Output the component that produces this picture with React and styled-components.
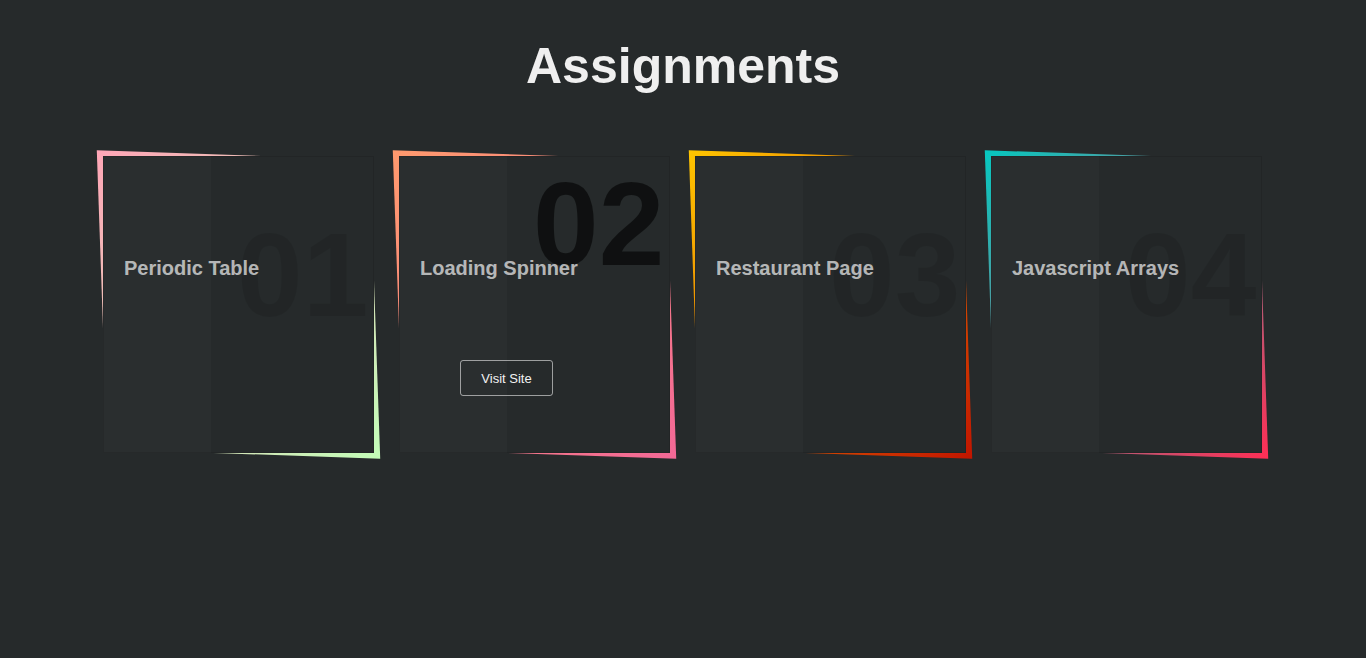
import styled, { createGlobalStyle } from 'styled-components';

const GlobalStyle = createGlobalStyle`
  html, body {
    margin: 0;
    padding: 0;
    background: #262a2b;
    font-family: "Liberation Sans", Arial, sans-serif;
  }
`;

const Page = styled.main`
  min-height: 658px;
  padding-top: 38px;
  box-sizing: border-box;
`;

const Heading = styled.h1`
  margin: 0 0 61px;
  text-align: center;
  font-size: 50px;
  line-height: 57px;
  font-weight: 700;
  color: #efefef;
`;

const CardRow = styled.section`
  position: relative;
  z-index: 0;
  display: flex;
  justify-content: center;
  gap: 25px;
  padding-right: 1px;
`;

const Card = styled.article`
  position: relative;
  width: 271px;
  height: 297px;
  background: #262a2b;
  box-shadow: inset 0 0 0 1px rgba(0, 0, 0, 0.1);

  &::before {
    content: '';
    position: absolute;
    inset: -1px;
    background: linear-gradient(315deg, ${p => p.$to}, ${p => p.$from});
    transform: skew(2deg, 2deg);
    z-index: -1;
  }

  &::after {
    content: '';
    position: absolute;
    top: 0;
    left: 0;
    width: 40%;
    height: 100%;
    background: rgba(255, 255, 255, 0.02);
    pointer-events: none;
  }
`;

const Number = styled.span`
  position: absolute;
  left: 134px;
  top: ${p => (p.$active ? '9px' : '60px')};
  font-size: 118px;
  line-height: 1;
  font-weight: 700;
  color: ${p => (p.$active ? 'rgba(0, 0, 0, 0.6)' : 'rgba(0, 0, 0, 0.1)')};
  pointer-events: none;
`;

const Content = styled.div`
  position: relative;
  z-index: 1;
  display: flex;
  flex-direction: column;
  align-items: flex-start;
  padding: 100px 20px 0 21px;
`;

const Title = styled.h3`
  margin: 0;
  font-size: 20px;
  line-height: 24px;
  font-weight: 700;
  color: rgba(255, 255, 255, 0.68);
`;

const VisitButton = styled.a`
  margin: 80px 0 0 40px;
  width: 93px;
  height: 36px;
  box-sizing: border-box;
  display: ${p => (p.$show ? 'flex' : 'none')};
  align-items: center;
  justify-content: center;
  border: 1px solid rgba(255, 255, 255, 0.55);
  border-radius: 3px;
  font-size: 13px;
  color: #f2f2f2;
  text-decoration: none;
`;

const cards = [
  { num: '01', title: 'Periodic Table', from: '#ffa6b7', to: '#c3fdb8' },
  { num: '02', title: 'Loading Spinner', from: '#ff9a6e', to: '#f26896', active: true },
  { num: '03', title: 'Restaurant Page', from: '#ffc500', to: '#c21500' },
  { num: '04', title: 'Javascript Arrays', from: '#06c8c0', to: '#ff2e55' },
];

export default function App() {
  return (
    <>
      <GlobalStyle />
      <Page>
        <Heading>Assignments</Heading>
        <CardRow>
          {cards.map(card => (
            <Card key={card.num} $from={card.from} $to={card.to}>
              <Number $active={card.active}>{card.num}</Number>
              <Content>
                <Title>{card.title}</Title>
                <VisitButton href="#" $show={card.active}>Visit Site</VisitButton>
              </Content>
            </Card>
          ))}
        </CardRow>
      </Page>
    </>
  );
}
